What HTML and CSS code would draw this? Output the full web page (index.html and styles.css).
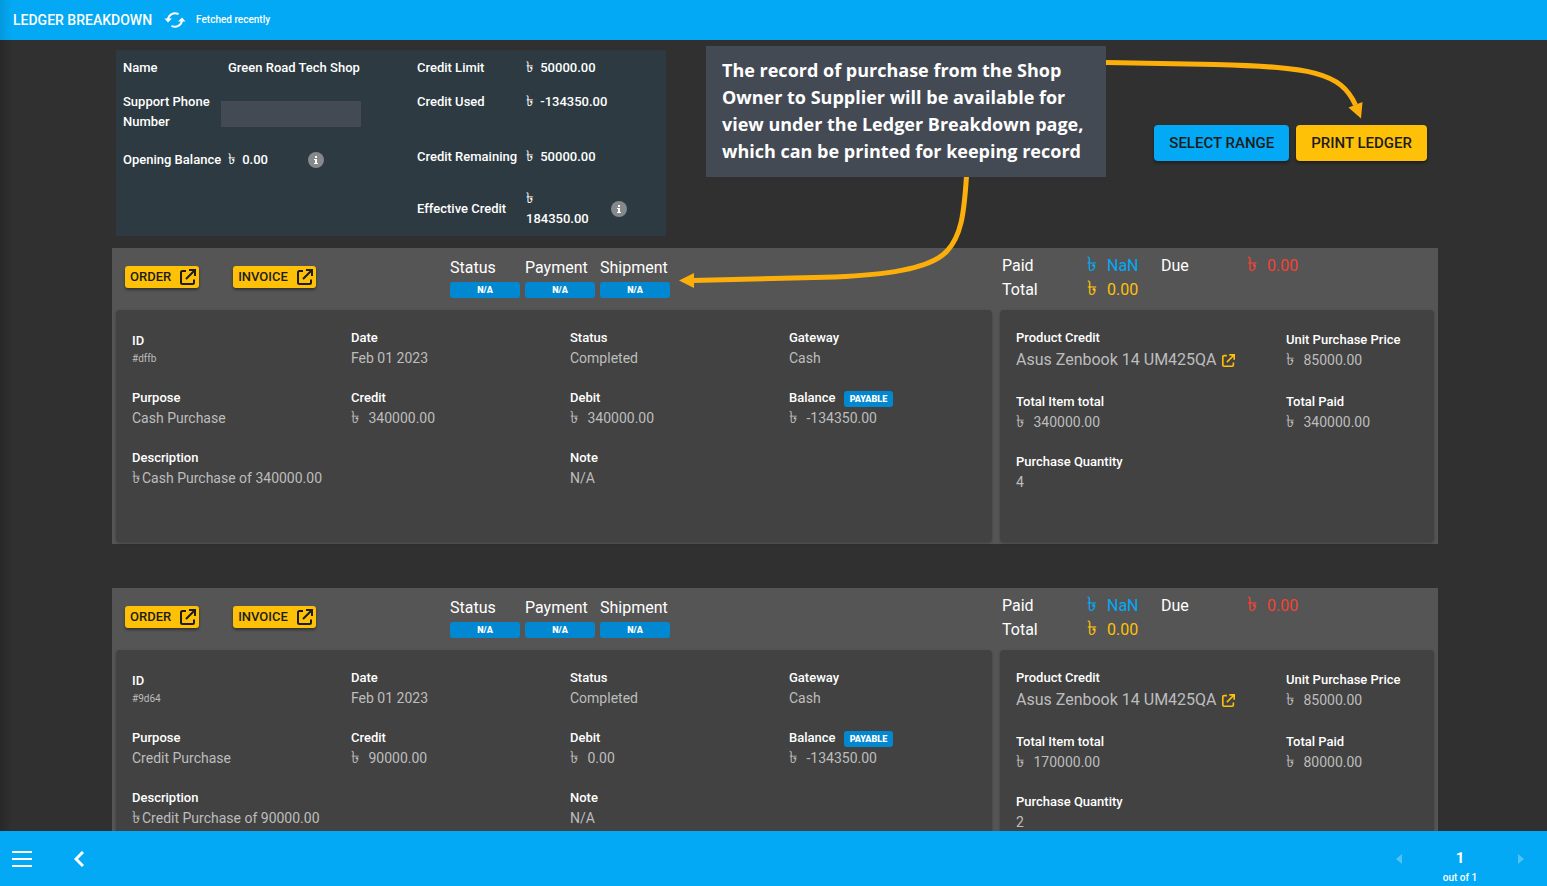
FILE: index.html
```html
<!DOCTYPE html>
<html lang="en">
<head>
<meta charset="utf-8">
<title>Ledger Breakdown</title>
<link rel="stylesheet" href="styles.css">
</head>
<body>
<svg class="sprite" aria-hidden="true">
  <symbol id="open" viewBox="0 0 16 16"><path d="M6 2H2.500Q1 2 1 3.500V13.500Q1 15 2.500 15H12.500Q14 15 14 13.500V10.500M9 1H15V7M14.500 1.500 6 10" fill="none" stroke="currentColor" stroke-width="2"/></symbol>
  <symbol id="info" viewBox="0 0 16 16"><circle cx="8" cy="8" r="8" fill="#85898b"/><path d="M7 4h2v2H7zM6 7h3v4h1v1H6v-1h1V8H6z" fill="#fff"/></symbol>
</svg>

<header class="topbar">
  <h1 class="topbar-title">LEDGER BREAKDOWN</h1>
  <button class="icon-button" type="button" aria-label="Refresh">
    <svg width="22" height="18" viewBox="0 0 22 18"><path d="M4 9A7 7 0 0 1 14.500 3.200M18 9A7 7 0 0 1 7.500 14.800" fill="none" stroke="currentColor" stroke-width="2"/><path d="M0.500 7.500H8L4 11.500zM21.500 10.500H14L18 6.500z" fill="currentColor"/></svg>
  </button>
  <span class="topbar-note">Fetched recently</span>
</header>

<main class="content">
  <section class="overview">
    <div class="summary">
      <div class="summary-col">
        <div class="fact"><span class="fact-label">Name</span><span>Green Road Tech Shop</span></div>
        <div class="fact fact-tall"><span class="fact-label">Support Phone Number</span><span class="redacted"></span></div>
        <div class="fact fact-low"><span class="fact-label">Opening Balance</span><span class="fact-amount"><span class="taka">৳</span> 0.00</span><svg class="info" width="16" height="16"><use href="#info"/></svg></div>
      </div>
      <div class="summary-col">
        <div class="fact"><span class="fact-label">Credit Limit</span><span><span class="taka">৳</span> 50000.00</span></div>
        <div class="fact fact-tall"><span class="fact-label">Credit Used</span><span><span class="taka">৳</span> -134350.00</span></div>
        <div class="fact fact-mid"><span class="fact-label">Credit Remaining</span><span><span class="taka">৳</span> 50000.00</span></div>
        <div class="fact fact-wrap"><span class="fact-label">Effective Credit</span><span class="fact-amount"><span class="taka">৳</span> 184350.00</span><svg class="info" width="16" height="16"><use href="#info"/></svg></div>
      </div>
    </div>
    <div class="actions">
      <button class="button button-blue" type="button">SELECT RANGE</button>
      <button class="button button-amber" type="button">PRINT LEDGER</button>
    </div>
  </section>

  <article class="record">
    <div class="record-links">
      <button class="chip-button" type="button">ORDER <svg width="16" height="16"><use href="#open"/></svg></button>
      <button class="chip-button" type="button">INVOICE <svg width="16" height="16"><use href="#open"/></svg></button>
    </div>
    <div class="record-states">
      <div class="state">Status<span class="badge">N/A</span></div>
      <div class="state">Payment<span class="badge">N/A</span></div>
      <div class="state">Shipment<span class="badge">N/A</span></div>
    </div>
    <div class="record-totals">
      <span>Paid</span><span class="blue"><span class="taka">৳</span> NaN</span><span>Due</span><span class="red"><span class="taka">৳</span> 0.00</span>
      <span>Total</span><span class="amber"><span class="taka">৳</span> 0.00</span>
    </div>
    <div class="card card-main">
      <div class="field"><span class="label">ID</span><span class="value value-small">#dffb</span></div>
      <div class="field"><span class="label">Date</span><span class="value">Feb 01 2023</span></div>
      <div class="field"><span class="label">Status</span><span class="value">Completed</span></div>
      <div class="field"><span class="label">Gateway</span><span class="value">Cash</span></div>
      <div class="field"><span class="label">Purpose</span><span class="value">Cash Purchase</span></div>
      <div class="field"><span class="label">Credit</span><span class="value"><span class="taka">৳</span> 340000.00</span></div>
      <div class="field"><span class="label">Debit</span><span class="value"><span class="taka">৳</span> 340000.00</span></div>
      <div class="field"><span class="label">Balance <span class="badge badge-inline">PAYABLE</span></span><span class="value"><span class="taka">৳</span> -134350.00</span></div>
      <div class="field field-wide"><span class="label">Description</span><span class="value"><span class="taka taka-tight">৳</span>Cash Purchase of 340000.00</span></div>
      <div class="field"><span class="label">Note</span><span class="value">N/A</span></div>
    </div>
    <div class="card card-product">
      <div class="field"><span class="label">Product Credit</span><a class="value value-large" href="#product">Asus Zenbook 14 UM425QA <svg class="amber" width="13" height="13"><use href="#open"/></svg></a></div>
      <div class="field"><span class="label">Unit Purchase Price</span><span class="value"><span class="taka">৳</span> 85000.00</span></div>
      <div class="field"><span class="label">Total Item total</span><span class="value"><span class="taka">৳</span> 340000.00</span></div>
      <div class="field"><span class="label">Total Paid</span><span class="value"><span class="taka">৳</span> 340000.00</span></div>
      <div class="field"><span class="label">Purchase Quantity</span><span class="value">4</span></div>
    </div>
  </article>

  <article class="record">
    <div class="record-links">
      <button class="chip-button" type="button">ORDER <svg width="16" height="16"><use href="#open"/></svg></button>
      <button class="chip-button" type="button">INVOICE <svg width="16" height="16"><use href="#open"/></svg></button>
    </div>
    <div class="record-states">
      <div class="state">Status<span class="badge">N/A</span></div>
      <div class="state">Payment<span class="badge">N/A</span></div>
      <div class="state">Shipment<span class="badge">N/A</span></div>
    </div>
    <div class="record-totals">
      <span>Paid</span><span class="blue"><span class="taka">৳</span> NaN</span><span>Due</span><span class="red"><span class="taka">৳</span> 0.00</span>
      <span>Total</span><span class="amber"><span class="taka">৳</span> 0.00</span>
    </div>
    <div class="card card-main">
      <div class="field"><span class="label">ID</span><span class="value value-small">#9d64</span></div>
      <div class="field"><span class="label">Date</span><span class="value">Feb 01 2023</span></div>
      <div class="field"><span class="label">Status</span><span class="value">Completed</span></div>
      <div class="field"><span class="label">Gateway</span><span class="value">Cash</span></div>
      <div class="field"><span class="label">Purpose</span><span class="value">Credit Purchase</span></div>
      <div class="field"><span class="label">Credit</span><span class="value"><span class="taka">৳</span> 90000.00</span></div>
      <div class="field"><span class="label">Debit</span><span class="value"><span class="taka">৳</span> 0.00</span></div>
      <div class="field"><span class="label">Balance <span class="badge badge-inline">PAYABLE</span></span><span class="value"><span class="taka">৳</span> -134350.00</span></div>
      <div class="field field-wide"><span class="label">Description</span><span class="value"><span class="taka taka-tight">৳</span>Credit Purchase of 90000.00</span></div>
      <div class="field"><span class="label">Note</span><span class="value">N/A</span></div>
    </div>
    <div class="card card-product">
      <div class="field"><span class="label">Product Credit</span><a class="value value-large" href="#product">Asus Zenbook 14 UM425QA <svg class="amber" width="13" height="13"><use href="#open"/></svg></a></div>
      <div class="field"><span class="label">Unit Purchase Price</span><span class="value"><span class="taka">৳</span> 85000.00</span></div>
      <div class="field"><span class="label">Total Item total</span><span class="value"><span class="taka">৳</span> 170000.00</span></div>
      <div class="field"><span class="label">Total Paid</span><span class="value"><span class="taka">৳</span> 80000.00</span></div>
      <div class="field"><span class="label">Purchase Quantity</span><span class="value">2</span></div>
    </div>
  </article>
</main>

<footer class="bottombar">
  <button class="icon-button" type="button" aria-label="Menu"><svg width="20" height="16" viewBox="0 0 20 16"><path d="M0 1h20M0 8h20M0 15h20" stroke="currentColor" stroke-width="2"/></svg></button>
  <button class="icon-button" type="button" aria-label="Back"><svg width="10" height="16" viewBox="0 0 10 16"><path d="M9 1 2 8l7 7" fill="none" stroke="currentColor" stroke-width="3"/></svg></button>
  <nav class="pager" aria-label="Pages">
    <button class="icon-button" type="button" aria-label="Previous page" disabled><svg width="6" height="10"><path d="M6 0v10L0 5z" fill="currentColor"/></svg></button>
    <span class="pager-count"><strong class="pager-page">1</strong><span class="pager-total">out of 1</span></span>
    <button class="icon-button" type="button" aria-label="Next page" disabled><svg width="6" height="10"><path d="M0 0v10l6-5z" fill="currentColor"/></svg></button>
  </nav>
</footer>

<svg class="arrows" width="1547" height="300" aria-hidden="true">
  <g fill="none" stroke="#fcaf0b" stroke-width="5">
    <path d="M1106 62.500 1215 64.500C1310 67 1341 72 1355.500 105"/>
    <path d="M966.500 176C964 215 961 236 947 251C930 270 880 275 835 277C790 278.500 740 279 692 280.500"/>
  </g>
  <path d="M1348.500 107.500 1362.500 102 1361 118.500zM694 273V288L679 280.500z" fill="#fcaf0b"/>
</svg>
<aside class="callout">The record of purchase from the Shop Owner to Supplier will be available for view under the Ledger Breakdown page, which can be printed for keeping record</aside>
</body>
</html>
```
FILE: styles.css
```css
* { box-sizing: border-box; }

body {
  margin: 0;
  height: 100vh;
  display: flex;
  flex-direction: column;
  overflow: hidden;
  background: #303030;
  color: #fff;
  font: 500 13px/20px Roboto, sans-serif;
}

button {
  border: 0;
  font: inherit;
  color: inherit;
}

svg { flex: none; }

.sprite {
  position: absolute;
  width: 0;
  height: 0;
}

.blue { color: #03a9f4; }
.red { color: #f44336; }
.amber { color: #ffc107; }

.taka {
  margin-right: 4px;
  font-size: 15px;
  line-height: 0;
}

.value .taka {
  margin-right: 6px;
  font-size: 17px;
}

.value .taka-tight { margin-right: 2px; }

.record-totals .taka {
  margin-right: 6px;
  font-size: 20px;
}

.icon-button {
  display: flex;
  padding: 0;
  background: none;
}

.icon-button:disabled { opacity: 0.3; }

/* Bars */
.topbar {
  flex: none;
  display: flex;
  align-items: center;
  height: 40px;
  padding-left: 13px;
  background: linear-gradient(to right, #0398dc, #03a9f4 12px);
}

.topbar-title {
  margin: 0 12px 0 0;
  font-size: 14px;
  font-weight: 500;
}

.topbar-note {
  margin-left: 10px;
  font-size: 10px;
}

.bottombar {
  flex: none;
  display: flex;
  align-items: center;
  gap: 42px;
  height: 55px;
  padding: 0 23px 0 12px;
  background: #03a9f4;
}

.pager {
  display: flex;
  align-items: center;
  gap: 40px;
  margin-left: auto;
}

.pager-count {
  position: relative;
  width: 36px;
  text-align: center;
}

.pager-page {
  font-size: 15px;
  font-weight: 700;
}

.pager-total {
  position: absolute;
  top: 20px;
  left: 0;
  width: 36px;
  font-size: 10px;
}

/* Overview */
.content {
  flex: 1;
  min-height: 0;
  overflow: hidden;
  padding: 10px 109px 0 112px;
  background: linear-gradient(to right, #282828, #303030 12px);
}

.overview {
  display: flex;
  align-items: center;
  justify-content: space-between;
  padding: 0 11px 0 4px;
  margin-bottom: 12px;
}

.summary {
  display: grid;
  grid-template-columns: 294px 1fr;
  width: 550px;
  padding: 8px 7px 7px;
  background: #2d3a41;
}

.fact {
  display: flex;
  align-items: center;
  margin-bottom: 14px;
}

.fact-label {
  flex: none;
  width: 105px;
}

.summary-col + .summary-col .fact-label { width: 109px; }

.fact-tall {
  height: 40px;
  margin-bottom: 15px;
  align-items: flex-start;
}

.fact-tall .fact-label { padding-right: 16px; }
.fact-low { padding-top: 3px; }
.fact-mid { margin-bottom: 22px; }
.fact-wrap { margin-bottom: 0; }
.fact-amount { width: 80px; }
.fact-wrap .fact-amount { width: 64px; margin-right: 21px; }

.redacted {
  width: 140px;
  height: 26px;
  margin: 9px 0 0 -7px;
  background: #444a54;
}

.actions {
  display: flex;
  gap: 7px;
}

.button {
  padding: 8px 15px;
  border-radius: 4px;
  color: #1c1c1c;
  font-size: 15px;
  box-shadow: 0 2px 3px #0006;
}

.button-blue { background: #03a9f4; }
.button-amber { background: #ffc107; }

/* Ledger records */
.record {
  display: grid;
  grid-template-columns: 338fr 546fr 442fr;
  grid-template-rows: 62px auto;
  padding-bottom: 2px;
  margin-bottom: 44px;
  background: #555;
}

.record-links {
  display: flex;
  align-items: flex-start;
  gap: 34px;
  padding: 18px 13px;
}

.chip-button {
  display: flex;
  align-items: center;
  gap: 9px;
  height: 22px;
  padding: 0 3px 0 5px;
  border-radius: 3px;
  background: #ffc107;
  color: #1c1c1c;
  box-shadow: 0 2px 3px #0006;
}

.record-states {
  display: flex;
  gap: 5px;
  padding-top: 8px;
}

.state {
  width: 70px;
  font-size: 16px;
  font-weight: 400;
  line-height: 24px;
}

.badge {
  display: block;
  margin-top: 2px;
  border-radius: 3px;
  background: #0288d1;
  color: #fff;
  font-size: 9px;
  font-weight: 900;
  line-height: 16px;
  text-align: center;
}

.badge-inline {
  display: inline-block;
  margin: 0 0 0 5px;
  padding: 0 6px;
}

.record-totals {
  display: grid;
  grid-template-columns: 85px 74px 86px 1fr;
  grid-auto-rows: 24px;
  padding: 6px;
  font-size: 16px;
  font-weight: 400;
  line-height: 24px;
}

.card {
  display: grid;
  align-content: start;
  align-items: center;
  row-gap: 20px;
  min-height: 232px;
  padding-top: 18px;
  margin: 0 4px;
  border-radius: 4px;
  background: #424242;
  box-shadow: 0 1px 3px #0004;
}

.card-main {
  grid-column: 1 / 3;
  grid-template-columns: repeat(4, 1fr);
}

.card-product { grid-template-columns: 270fr 164fr; }

.field { padding-left: 16px; }
.field-wide { grid-column: span 2; }

.label, .value {
  display: block;
  height: 20px;
}

.value {
  color: #bdbdbd;
  font-size: 14px;
  font-weight: 400;
}

.value-small {
  height: 14px;
  font-size: 10px;
  line-height: 16px;
}

.value-large {
  display: flex;
  align-items: center;
  gap: 5px;
  height: 24px;
  font-size: 16px;
  line-height: 24px;
  text-decoration: none;
}

/* Annotations */
.arrows {
  position: absolute;
  top: 0;
  left: 0;
}

.callout {
  position: absolute;
  top: 46px;
  left: 706px;
  width: 400px;
  padding: 11px 8px 12px 16px;
  background: #444a54;
  font: 700 18px/27px "Open Sans", sans-serif;
}
```
